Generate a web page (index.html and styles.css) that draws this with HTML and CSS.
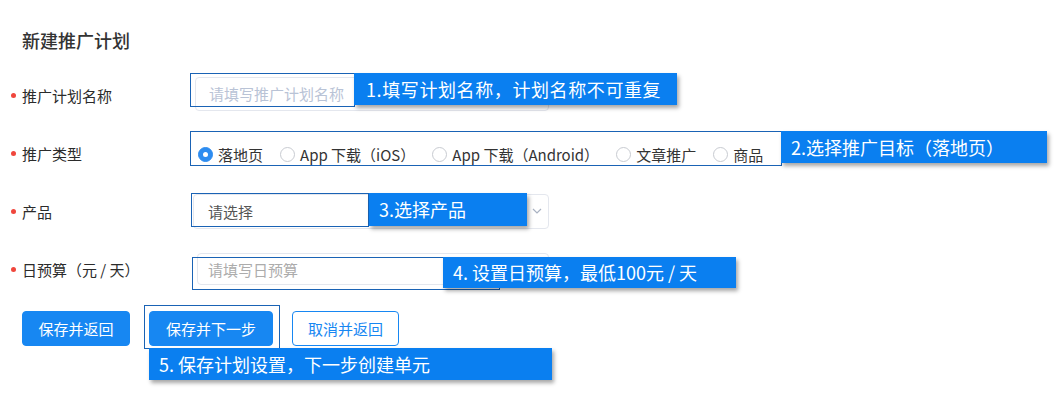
FILE: index.html
```html
<!DOCTYPE html>
<html lang="zh-CN">
<head>
    <meta charset="UTF-8">
    <meta name="viewport" content="width=device-width, initial-scale=1.0">
    <title>新建推广计划</title>
    <link rel="stylesheet" href="styles.css">
</head>
<body>
    <div class="page">
        <h1 class="page-title">新建推广计划</h1>

        <div class="plan-form">
            <div class="form-row">
                <label class="form-label"><span class="req-dot"></span>推广计划名称</label>
                <input type="text" class="form-input input-name" placeholder="请填写推广计划名称">
            </div>

            <div class="form-row">
                <label class="form-label"><span class="req-dot"></span>推广类型</label>
                <div class="radio-group">
                    <span class="radio-item"><span class="radio checked"></span>落地页</span>
                    <span class="radio-item"><span class="radio"></span>App 下载（iOS）</span>
                    <span class="radio-item"><span class="radio"></span>App 下载（Android）</span>
                    <span class="radio-item"><span class="radio"></span>文章推广</span>
                    <span class="radio-item"><span class="radio"></span>商品</span>
                </div>
            </div>

            <div class="form-row">
                <label class="form-label"><span class="req-dot"></span>产品</label>
                <div class="form-select">
                    <span class="select-value">请选择</span>
                    <svg class="select-arrow" width="10" height="6" viewBox="0 0 10 6">
                        <polyline points="1,1 5,5 9,1" fill="none" stroke="#a9b2c2" stroke-width="1.2"/>
                    </svg>
                </div>
            </div>

            <div class="form-row">
                <label class="form-label"><span class="req-dot"></span>日预算（元 / 天）</label>
                <input type="text" class="form-input input-budget" placeholder="请填写日预算">
            </div>
        </div>

        <div class="form-actions">
            <button class="btn btn-primary">保存并返回</button>
            <button class="btn btn-primary btn-next">保存并下一步</button>
            <button class="btn btn-outline">取消并返回</button>
        </div>

        <!-- guide overlays -->
        <div class="mark mark-1"></div>
        <div class="mark mark-2"></div>
        <div class="mark mark-3"></div>
        <div class="mark mark-4"></div>
        <div class="mark mark-5"></div>

        <div class="note note-1">1.填写计划名称，计划名称不可重复</div>
        <div class="note note-2">2.选择推广目标（落地页）</div>
        <div class="note note-3">3.选择产品</div>
        <div class="note note-4">4. 设置日预算，最低100元 / 天</div>
        <div class="note note-5">5. 保存计划设置，下一步创建单元</div>
    </div>
</body>
</html>
```

FILE: styles.css
```css
* {
    margin: 0;
    padding: 0;
    box-sizing: border-box;
    font-family: "Noto Sans CJK SC", "Noto Sans", sans-serif;
}

body {
    background-color: #fff;
    color: #333;
}

.page {
    position: relative;
    width: 1062px;
    height: 402px;
    padding-top: 29px;
    overflow: hidden;
}

.page-title {
    font-size: 18px;
    font-weight: 500;
    line-height: 22px;
    padding-left: 22px;
    margin-bottom: 15px;
    color: #333;
}

.form-row {
    display: flex;
    align-items: center;
    height: 58px;
}

.form-label {
    display: flex;
    align-items: center;
    gap: 6px;
    width: 195px;
    padding-left: 11px;
    font-size: 15px;
    color: #2b2b2b;
}

.req-dot {
    width: 5px;
    height: 5px;
    border-radius: 50%;
    background-color: #f0463c;
}

.form-input {
    width: 354px;
    height: 34px;
    padding: 0 13px;
    border: 1px solid #e4e7ee;
    border-radius: 4px;
    font-size: 15px;
    color: #333;
    outline: none;
}

.form-input::placeholder {
    color: #b9c3d6;
}

.input-name {
    margin-top: -3px;
}

.input-budget {
    height: 32px;
    padding: 0 10px;
    margin-left: 2px;
    width: 352px;
}

.input-budget::placeholder {
    color: #acacac;
}

.radio-group {
    display: flex;
    align-items: center;
    gap: 17px;
    padding-left: 3px;
    margin-top: 2px;
    font-size: 15px;
    color: #333;
}

.radio-item {
    display: flex;
    align-items: center;
    gap: 5px;
}

.radio {
    position: relative;
    width: 15px;
    height: 15px;
    border: 1px solid #c8cbd1;
    border-radius: 50%;
}

.radio.checked {
    background-color: #2d8cf0;
    border-color: #2d8cf0;
}

.radio.checked::after {
    content: "";
    position: absolute;
    top: 4px;
    left: 4px;
    width: 5px;
    height: 5px;
    border-radius: 50%;
    background-color: #fff;
}

.form-select {
    display: flex;
    align-items: center;
    justify-content: space-between;
    width: 356px;
    height: 35px;
    padding: 0 6px 0 14px;
    border: 1px solid #e4e7ee;
    border-radius: 4px;
    margin-left: -2px;
    font-size: 15px;
}

.select-value {
    color: #555;
}

.form-actions {
    display: flex;
    gap: 19px;
    padding-left: 22px;
    margin-top: 13px;
}

.btn {
    height: 35px;
    padding: 0 14px;
    border-radius: 4px;
    font-size: 15px;
    cursor: pointer;
}

.btn-primary {
    width: 108px;
    background-color: #1787f2;
    border: 1px solid #1787f2;
    color: #fff;
}

.btn-next {
    width: 124px;
}

.btn-outline {
    width: 107px;
    background-color: #fff;
    border: 1px solid #1787f2;
    color: #1787f2;
}

/* guide overlays */
.mark {
    position: absolute;
    border: 1.5px solid #1a63b5;
}

.mark-1 { left: 190px; top: 73px; width: 165px; height: 34px; }
.mark-2 { left: 190px; top: 131px; width: 592px; height: 35px; }
.mark-3 { left: 191px; top: 193px; width: 178px; height: 34px; }
.mark-4 { left: 192px; top: 257px; width: 308px; height: 33px; }
.mark-5 { left: 144px; top: 305px; width: 136px; height: 44px; }

.note {
    position: absolute;
    padding-left: 10px;
    background-color: #0a7ff0;
    color: #fff;
    font-size: 18px;
    white-space: nowrap;
    box-shadow: 2px 3px 4px rgba(0, 0, 0, 0.35);
}

.note-1 { left: 354px; top: 73px; width: 323px; height: 32px; line-height: 32px; padding-left: 12px; letter-spacing: 0.6px; }
.note-2 { left: 781px; top: 131px; width: 266px; height: 32px; line-height: 32px; }
.note-3 { left: 369px; top: 193px; width: 158px; height: 33px; line-height: 33px; }
.note-4 { left: 443px; top: 257px; width: 293px; height: 31px; line-height: 31px; }
.note-5 { left: 149px; top: 348px; width: 403px; height: 32px; line-height: 32px; }
```
